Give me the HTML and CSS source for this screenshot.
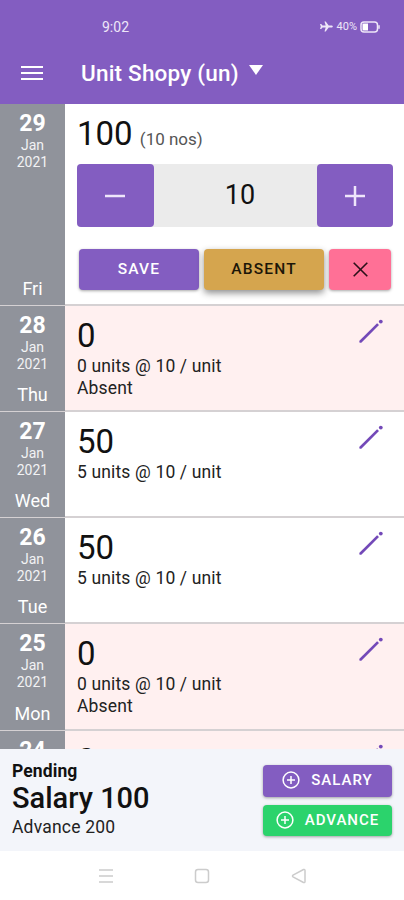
FILE: index.html
```html
<!DOCTYPE html>
<html lang="en">
<head>
    <meta charset="UTF-8">
    <meta name="viewport" content="width=device-width, initial-scale=1.0">
    <title>Unit Shopy (un)</title>
    <link rel="stylesheet" href="styles.css">
</head>
<body>
    <svg class="defs" width="0" height="0">
        <symbol id="pencil" viewBox="0 0 26 26">
            <path d="M1.500 24.500q-.6-1 .2-1.900L19.100 5.200l1.900 1.900L3.600 24.400q-1.200.8-2.100.1z"/>
            <circle cx="22.800" cy="3.600" r="1.900"/>
        </symbol>
        <symbol id="plus-circle" viewBox="0 0 18 18">
            <circle cx="9" cy="9" r="7.900"/>
            <path d="M9 5v8M5 9h8"/>
        </symbol>
    </svg>

    <header class="header">
        <div class="status-bar">
            <span class="time">9:02</span>
            <div class="status-icons">
                <svg class="plane" width="15" height="13" viewBox="0 0 15 13">
                    <path d="M13.800 6.500c0-.7-.7-1-1.600-1H9.700L6.700 1.500H5.500l1.200 4H3.500L2.200 4H1l.8 2.500L1 9h1.200l1.300-1.500h3.200l-1.200 4h1.200l3-4h2.500c.9 0 1.600-.3 1.600-1z"/>
                </svg>
                <span class="percent">40%</span>
                <svg class="battery" width="20" height="12" viewBox="0 0 20 12">
                    <rect x="1" y="1" width="16.500" height="10" rx="3"/>
                    <path class="level" d="M3.500 2.500H8v7H3.500q-1 0-1-1v-5q0-1 1-1z"/>
                    <path d="M19 4.300v3.400"/>
                </svg>
            </div>
        </div>
        <div class="toolbar">
            <div class="menu-icon"><i></i><i></i><i></i></div>
            <h1 class="title">Unit Shopy (un)</h1>
            <span class="caret"></span>
        </div>
    </header>

    <main class="days">
        <div class="day editing">
            <div class="date"><b>29</b><span>Jan</span><span>2021</span><em>Fri</em></div>
            <div class="entry">
                <div class="amount">100 <small>(10 nos)</small></div>
                <div class="stepper">
                    <button class="step"><svg width="20" height="20" viewBox="0 0 20 20"><path d="M0 10h20"/></svg></button>
                    <div class="count">10</div>
                    <button class="step"><svg width="20" height="20" viewBox="0 0 20 20"><path d="M0 10h20M10 0v20"/></svg></button>
                </div>
                <div class="actions">
                    <button class="btn save">SAVE</button>
                    <button class="btn absent-btn">ABSENT</button>
                    <button class="btn close"><svg width="15" height="15" viewBox="0 0 15 15"><path d="M.7.7l13.600 13.600M14.300.7L.7 14.300"/></svg></button>
                </div>
            </div>
        </div>
        <div class="day absent">
            <div class="date"><b>28</b><span>Jan</span><span>2021</span><em>Thu</em></div>
            <div class="entry">
                <div class="amount">0</div>
                <p>0 units @ 10 / unit</p>
                <p>Absent</p>
            </div>
            <svg class="edit"><use href="#pencil"/></svg>
        </div>
        <div class="day">
            <div class="date"><b>27</b><span>Jan</span><span>2021</span><em>Wed</em></div>
            <div class="entry">
                <div class="amount">50</div>
                <p>5 units @ 10 / unit</p>
            </div>
            <svg class="edit"><use href="#pencil"/></svg>
        </div>
        <div class="day">
            <div class="date"><b>26</b><span>Jan</span><span>2021</span><em>Tue</em></div>
            <div class="entry">
                <div class="amount">50</div>
                <p>5 units @ 10 / unit</p>
            </div>
            <svg class="edit"><use href="#pencil"/></svg>
        </div>
        <div class="day absent">
            <div class="date"><b>25</b><span>Jan</span><span>2021</span><em>Mon</em></div>
            <div class="entry">
                <div class="amount">0</div>
                <p>0 units @ 10 / unit</p>
                <p>Absent</p>
            </div>
            <svg class="edit"><use href="#pencil"/></svg>
        </div>
        <div class="day absent">
            <div class="date"><b>24</b></div>
            <div class="entry">
                <div class="amount">0</div>
            </div>
            <svg class="edit"><use href="#pencil"/></svg>
        </div>
    </main>

    <footer class="summary">
        <div class="totals">
            <div class="pending">Pending</div>
            <div class="salary">Salary 100</div>
            <div class="advance">Advance 200</div>
        </div>
        <div class="pay">
            <button class="btn"><svg width="18" height="18"><use href="#plus-circle"/></svg>SALARY</button>
            <button class="btn green"><svg width="18" height="18"><use href="#plus-circle"/></svg>ADVANCE</button>
        </div>
    </footer>

    <nav class="nav-bar">
        <svg width="16" height="16" viewBox="0 0 16 16"><path d="M1 2h14M1 8h14M1 14h14"/></svg>
        <svg width="16" height="16" viewBox="0 0 16 16"><rect x="1.500" y="1.500" width="13" height="13" rx="2.500"/></svg>
        <svg width="16" height="16" viewBox="0 0 16 16"><path d="M2 7.200L12.500 1.500q1.500-.5 1.500 1v11q0 1.500-1.500 1L2 8.800q-1-.8 0-1.600z"/></svg>
    </nav>
</body>
</html>
```
FILE: styles.css
```css
* {
    box-sizing: border-box;
}
body {
    margin: 0;
    height: 900px;
    display: flex;
    flex-direction: column;
    overflow: hidden;
    font-family: Roboto, sans-serif;
    color: #111;
    background-color: #fff;
}
button {
    border: none;
    padding: 0;
    font-family: inherit;
}
svg {
    display: block;
    fill: none;
}
.defs {
    position: absolute;
}
.header {
    height: 104px;
    flex: none;
    background-color: #835dc1;
    color: #fff;
}
.status-bar {
    height: 53px;
    padding: 0 24px 0 102px;
    display: flex;
    justify-content: space-between;
    align-items: center;
}
.time {
    font-size: 14px;
    color: #eee6f8;
}
.status-icons {
    display: flex;
    align-items: center;
    color: #eee6f8;
}
.plane {
    fill: #eee6f8;
}
.percent {
    font-size: 11px;
    margin: 0 3px 0 3px;
}
.battery {
    stroke: #eee6f8;
    stroke-width: 1.5;
}
.battery .level {
    fill: #fff;
    stroke: none;
}
.toolbar {
    height: 40px;
    padding-left: 21px;
    display: flex;
    align-items: center;
}
.menu-icon {
    width: 22px;
    margin-right: 38px;
    display: grid;
    gap: 4px;
}
.menu-icon i {
    height: 2px;
    background-color: #fff;
}
.title {
    margin: 0;
    font-size: 22.500px;
    font-weight: 500;
    letter-spacing: 0.200px;
}
.caret {
    margin: -7px 0 0 10px;
    border: 7.500px solid transparent;
    border-top: 10px solid #fff;
    border-bottom: none;
}
.days {
    height: 645px;
    flex: none;
    overflow: hidden;
}
.day {
    height: 106.150px;
    display: flex;
    position: relative;
    border-bottom: 2px solid #d5d1d3;
}
.day.editing {
    height: 202px;
}
.day.absent {
    background-color: #fff0f0;
}
.date {
    width: 65px;
    height: calc(100% + 1px);
    padding: 6px 0 6px;
    display: flex;
    flex-direction: column;
    align-items: center;
    background-color: #90939b;
    color: #fff;
}
.date b {
    font-size: 23px;
    line-height: 27px;
}
.date span {
    font-size: 14px;
    line-height: 17px;
    color: #f2f2f4;
}
.date em {
    margin-top: auto;
    font-size: 18px;
    line-height: 21px;
    font-style: normal;
}
.entry {
    flex: 1;
    padding: 10px 11px 0 12px;
}
.amount {
    font-size: 33px;
    line-height: 40px;
}
.amount small {
    margin-left: -1px;
    font-size: 17px;
    color: #555;
}
.entry p {
    margin: 0;
    font-size: 17.500px;
    line-height: 21.500px;
    letter-spacing: 0.150px;
    color: #222;
}
.edit {
    position: absolute;
    top: 12px;
    right: 20px;
    width: 26px;
    height: 26px;
    fill: #7349b8;
}
.editing .amount {
    height: 40px;
}
.stepper {
    height: 63px;
    margin-top: 10px;
    display: flex;
    background-color: #ebebeb;
    border-radius: 4px;
}
.step {
    width: 76.500px;
    display: grid;
    place-items: center;
    background-color: #835dc1;
    border-radius: 4px;
}
.step svg {
    stroke: #efe6fb;
    stroke-width: 2.500;
}
.count {
    flex: 1;
    padding-left: 10px;
    font-size: 27px;
    line-height: 63px;
    text-align: center;
}
.actions {
    margin: 22px 2px 0;
    display: flex;
    gap: 5px;
}
.btn {
    display: flex;
    align-items: center;
    justify-content: center;
    border-radius: 4px;
    background-color: #835dc1;
    color: #fff;
    font-size: 15.500px;
    font-weight: 500;
    letter-spacing: 1.200px;
    box-shadow: 0 1px 3px rgba(0, 0, 0, 0.35);
}
.actions .btn {
    width: 120px;
    height: 41px;
    padding-bottom: 1px;
}
.actions .absent-btn {
    background-color: #d5a54e;
    color: #1c1608;
    box-shadow: 0 3px 7px rgba(0, 0, 0, 0.45);
}
.actions .close {
    width: 62px;
    background-color: #ff7096;
}
.close svg {
    stroke: #2b1119;
    stroke-width: 1.600;
}
.summary {
    height: 102px;
    flex: none;
    padding: 12px 12px 0;
    display: flex;
    justify-content: space-between;
    background-color: #f3f5fa;
}
.pending {
    font-size: 17.500px;
    line-height: 20px;
    font-weight: 700;
    letter-spacing: 0.100px;
}
.salary {
    font-size: 29px;
    line-height: 35px;
    font-weight: 500;
}
.advance {
    font-size: 17.500px;
    line-height: 22px;
    letter-spacing: 0.200px;
    color: #222;
}
.pay {
    padding-top: 4px;
    display: grid;
    gap: 8px;
    align-content: start;
}
.pay .btn {
    width: 129px;
    height: 31.500px;
    padding-bottom: 1px;
    gap: 11px;
    font-size: 15px;
    letter-spacing: 1px;
}
.pay .green {
    background-color: #2bd36c;
}
.pay svg {
    stroke: #fff;
    stroke-width: 1.500;
}
.nav-bar {
    flex: 1;
    display: flex;
    justify-content: center;
    align-items: center;
    gap: 80.500px;
}
.nav-bar svg {
    stroke: #ccc;
    stroke-width: 1.500;
}
```
